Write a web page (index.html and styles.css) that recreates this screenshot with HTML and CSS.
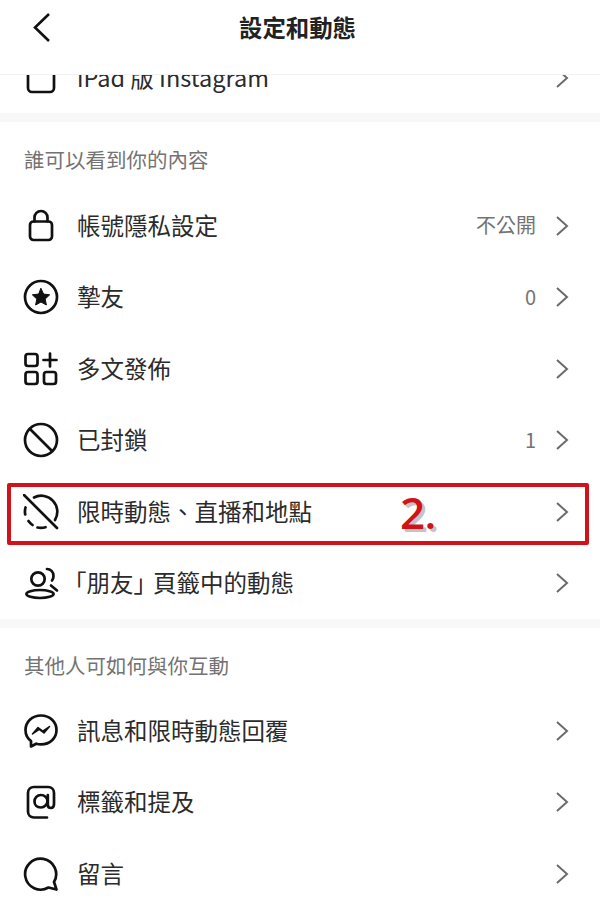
FILE: index.html
```html
<!DOCTYPE html>
<html lang="zh-Hant">
<head>
  <meta charset="UTF-8" />
  <title>設定和動態</title>
  <link rel="stylesheet" href="styles.css">
</head>
<body>

<header class="topbar">
  <svg class="back" viewBox="0 0 20 32"><path d="M17 2 3 15.500 17 29"/></svg>
  <h1>設定和動態</h1>
</header>

<!-- list is scrolled, first row is cut off by the header -->
<div class="clip-row">
  <div class="row">
    <svg class="icon" viewBox="0 0 36 36"><rect x="5" y="-6" width="26" height="38" rx="4"/></svg>
    <span class="label">iPad 版 Instagram</span>
    <svg class="chev" viewBox="0 0 14 22"><path d="M2 2 12 11 2 20"/></svg>
  </div>
</div>

<div class="band"></div>

<h2 class="section first">誰可以看到你的內容</h2>

<div class="row">
  <svg class="icon" viewBox="0 0 36 36"><rect x="7" y="13.500" width="22" height="18.500" rx="3.500"/><path d="M11.500 13.500v-4a6.500 6.500 0 0 1 13 0v4"/></svg>
  <span class="label">帳號隱私設定</span>
  <span class="value">不公開</span>
  <svg class="chev" viewBox="0 0 14 22"><path d="M2 2 12 11 2 20"/></svg>
</div>

<div class="row">
  <svg class="icon" viewBox="0 0 36 36"><circle cx="18" cy="18" r="16"/><path class="fill" d="m18 9.500 2.600 5.600 6.100.7-4.500 4.200 1.200 6-5.400-3-5.400 3 1.200-6-4.500-4.200 6.100-.7z"/></svg>
  <span class="label">摯友</span>
  <span class="value">0</span>
  <svg class="chev" viewBox="0 0 14 22"><path d="M2 2 12 11 2 20"/></svg>
</div>

<div class="row">
  <svg class="icon" viewBox="0 0 36 36"><rect x="2.500" y="3" width="12" height="12" rx="2.500"/><rect x="2.500" y="21" width="12" height="12" rx="2.500"/><rect x="21" y="21" width="12" height="12" rx="2.500"/><path d="M27 2.500v13M20.500 9h13"/></svg>
  <span class="label">多文發佈</span>
  <svg class="chev" viewBox="0 0 14 22"><path d="M2 2 12 11 2 20"/></svg>
</div>

<div class="row">
  <svg class="icon" viewBox="0 0 36 36"><circle cx="18" cy="18" r="16"/><path d="M7 7l22 22"/></svg>
  <span class="label">已封鎖</span>
  <span class="value">1</span>
  <svg class="chev" viewBox="0 0 14 22"><path d="M2 2 12 11 2 20"/></svg>
</div>

<div class="row marked">
  <svg class="icon" viewBox="0 0 36 36"><path d="M11 3.500A16 16 0 0 1 32 26"/><path d="M2.500 13.500a16 16 0 0 0-.3 7M5.500 27a16 16 0 0 0 4 4M14.500 33.500a16 16 0 0 0 8-.3M1 1l33 33"/></svg>
  <span class="label">限時動態、直播和地點</span>
  <svg class="chev" viewBox="0 0 14 22"><path d="M2 2 12 11 2 20"/></svg>
  <div class="red-box"></div>
  <span class="step">2<small>.</small></span>
</div>

<div class="row">
  <svg class="icon" viewBox="0 0 36 36"><circle cx="15" cy="14" r="6.700"/><ellipse cx="17" cy="29" rx="13.600" ry="4"/><path d="M24 4c3.500 0 6.500 2.800 6.500 7 0 1.800-.5 3.300-1.500 4.500M28 20.500l6 5"/></svg>
  <span class="label"><span class="bracket">「朋友<span class="tight">」</span>頁籤中的動態</span></span>
  <svg class="chev" viewBox="0 0 14 22"><path d="M2 2 12 11 2 20"/></svg>
</div>

<div class="band"></div>

<h2 class="section">其他人可如何與你互動</h2>

<div class="row">
  <svg class="icon" viewBox="0 0 36 36"><path d="M18 2.500C9 2.500 2.500 9 2.500 17c0 4.500 2 8.400 5.500 11v5.500l5.200-2.800c1.500.4 3.100.6 4.800.6 9 0 15.500-6.300 15.500-14.300S27 2.500 18 2.500z"/><path class="thin" d="m9.500 21 5.500-6.500 4.800 3.600 6.700-4.600-5.500 6.500-4.800-3.600z"/></svg>
  <span class="label">訊息和限時動態回覆</span>
  <svg class="chev" viewBox="0 0 14 22"><path d="M2 2 12 11 2 20"/></svg>
</div>

<div class="row">
  <svg class="icon" viewBox="0 0 36 36"><path d="M24 33.500H11c-3.500 0-6-2.500-6-6V9c0-3.500 2.500-6 6-6h14c3.500 0 6 2.500 6 6v11c0 2.500-1.300 4-3.200 4-1.800 0-3-1.400-3-3.500V11"/><path d="M24.500 17c0 3.500-3 6.500-6.800 6.500S11.500 21 11.500 17.500s2.700-6.500 6.300-6.500 6.700 2.500 6.700 6z"/></svg>
  <span class="label">標籤和提及</span>
  <svg class="chev" viewBox="0 0 14 22"><path d="M2 2 12 11 2 20"/></svg>
</div>

<div class="row">
  <svg class="icon" viewBox="0 0 36 36"><path d="M31 26A15.500 15.500 0 1 0 25.500 31.500L33.500 33.500z"/></svg>
  <span class="label">留言</span>
  <svg class="chev" viewBox="0 0 14 22"><path d="M2 2 12 11 2 20"/></svg>
</div>

</body>
</html>
```

FILE: styles.css
```css
:root {
  --ink: #2b2b2b;
  --grey: #737373;
  --chev: #6b6b6b;
  --band: #f8f8f8;
  --red: #d0121b;
}

body {
  margin: 0;
  height: 900px;
  overflow: hidden;
  background: #fff;
  color: var(--ink);
  font-family: "Noto Sans CJK TC", "Noto Sans", sans-serif;
}

.topbar {
  height: 75px;
  box-sizing: border-box;
  border-bottom: 1px solid #f2f2f2;
  display: flex;
  align-items: center;
  justify-content: center;
  position: relative;
}

.topbar h1 {
  margin: 0 5px 21px 0;
  font-size: 23.400px;
  font-weight: 700;
  line-height: 32px;
  color: #222;
}

.back {
  position: absolute;
  left: 32px;
  top: 12px;
  width: 20px;
  height: 32px;
  fill: none;
  stroke: #111;
  stroke-width: 2.600;
}

.clip-row {
  height: 38px;
  overflow: hidden;
}

.clip-row .row {
  margin-top: -33px;
}

.band {
  height: 9px;
  background: var(--band);
}

.section {
  margin: 0;
  height: 67px;
  box-sizing: border-box;
  padding: 6px 0 0 24px;
  display: flex;
  align-items: center;
  font-size: 20.500px;
  font-weight: 400;
  color: var(--grey);
}

.section.first {
  height: 68px;
}

.row {
  height: 71.500px;
  width: 596px;
  box-sizing: border-box;
  padding: 0 27px 0 23px;
  display: flex;
  align-items: center;
  position: relative;
}

.icon {
  width: 36px;
  height: 36px;
  flex: none;
  fill: none;
  stroke: #111;
  stroke-width: 2.700;
  stroke-linecap: round;
  stroke-linejoin: round;
}

.icon .fill {
  fill: #111;
  stroke-width: 1;
}

.icon .thin {
  fill: #111;
  stroke-width: 1.500;
}

.label {
  margin-left: 18px;
  font-size: 23.500px;
  line-height: 30px;
  padding-bottom: 2px;
  flex: 1;
  white-space: nowrap;
}

.bracket {
  margin-left: -14px;
}

.tight {
  letter-spacing: -4px;
}

.value {
  margin-right: 19px;
  padding-bottom: 2px;
  font-size: 20px;
  color: var(--grey);
}

.chev {
  width: 14px;
  height: 22px;
  flex: none;
  fill: none;
  stroke: var(--chev);
  stroke-width: 2;
}

/* annotation drawn on top of the screenshot */
.red-box {
  position: absolute;
  left: 7px;
  right: 7px;
  top: 7px;
  bottom: 3px;
  border: 4px solid var(--red);
  border-radius: 2px;
}

.step {
  position: absolute;
  left: 400px;
  top: 8px;
  font-family: "Open Sans", sans-serif;
  font-size: 44px;
  font-weight: 600;
  line-height: 56px;
  color: var(--red);
  text-shadow: 3px 3px 0 #c4c4c4;
}

.step small {
  font-size: 36px;
  font-weight: 700;
}
```
